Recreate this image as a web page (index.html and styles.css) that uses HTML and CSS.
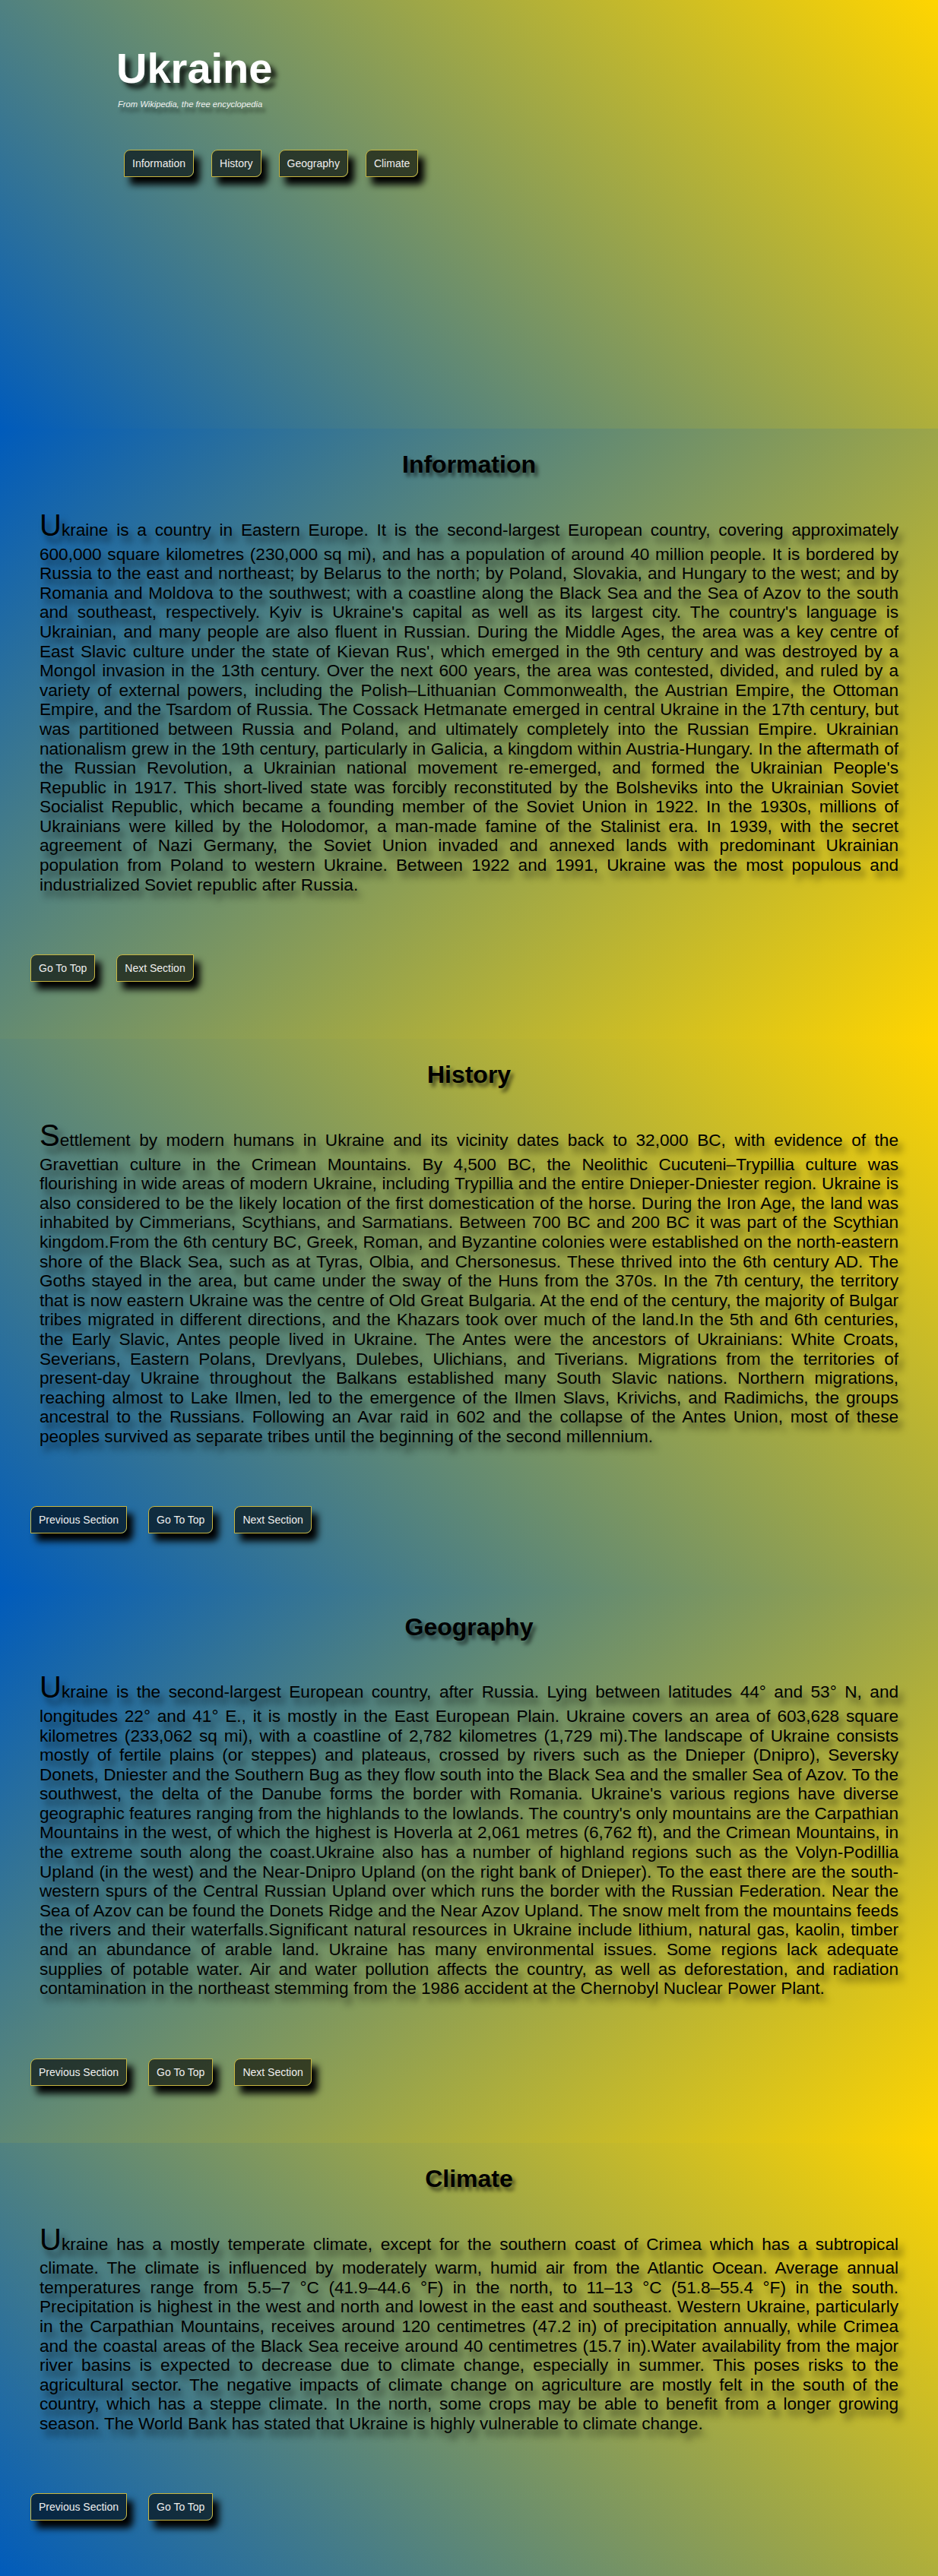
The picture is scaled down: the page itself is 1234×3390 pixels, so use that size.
FILE: index.html
```html
<!DOCTYPE html>
<html lang="en">
<head>
<meta charset="utf-8">
<title>Ukraine</title>
<link rel="stylesheet" href="styles.css">
</head>
<body>
<header class="header" id="top">
  <h1 class="title">Ukraine</h1>
  <div class="subtitle">From Wikipedia, the free encyclopedia</div>
  <nav class="nav">
    <a class="btn" href="#information">Information</a>
    <a class="btn" href="#history">History</a>
    <a class="btn" href="#geography">Geography</a>
    <a class="btn" href="#climate">Climate</a>
  </nav>
</header>

<section class="sec sec-a" id="information">
  <h2 class="sec-title">Information</h2>
  <p class="sec-text">Ukraine is a country in Eastern Europe. It is the second-largest European country, covering approximately 600,000 square kilometres (230,000 sq mi), and has a population of around 40 million people. It is bordered by Russia to the east and northeast; by Belarus to the north; by Poland, Slovakia, and Hungary to the west; and by Romania and Moldova to the southwest; with a coastline along the Black Sea and the Sea of Azov to the south and southeast, respectively. Kyiv is Ukraine's capital as well as its largest city. The country's language is Ukrainian, and many people are also fluent in Russian. During the Middle Ages, the area was a key centre of East Slavic culture under the state of Kievan Rus', which emerged in the 9th century and was destroyed by a Mongol invasion in the 13th century. Over the next 600 years, the area was contested, divided, and ruled by a variety of external powers, including the Polish–Lithuanian Commonwealth, the Austrian Empire, the Ottoman Empire, and the Tsardom of Russia. The Cossack Hetmanate emerged in central Ukraine in the 17th century, but was partitioned between Russia and Poland, and ultimately completely into the Russian Empire. Ukrainian nationalism grew in the 19th century, particularly in Galicia, a kingdom within Austria-Hungary. In the aftermath of the Russian Revolution, a Ukrainian national movement re-emerged, and formed the Ukrainian People's Republic in 1917. This short-lived state was forcibly reconstituted by the Bolsheviks into the Ukrainian Soviet Socialist Republic, which became a founding member of the Soviet Union in 1922. In the 1930s, millions of Ukrainians were killed by the Holodomor, a man-made famine of the Stalinist era. In 1939, with the secret agreement of Nazi Germany, the Soviet Union invaded and annexed lands with predominant Ukrainian population from Poland to western Ukraine. Between 1922 and 1991, Ukraine was the most populous and industrialized Soviet republic after Russia.</p>
  <div class="btns">
    <a class="btn" href="#top">Go To Top</a>
    <a class="btn" href="#history">Next Section</a>
  </div>
</section>

<section class="sec sec-b" id="history">
  <h2 class="sec-title">History</h2>
  <p class="sec-text">Settlement by modern humans in Ukraine and its vicinity dates back to 32,000 BC, with evidence of the Gravettian culture in the Crimean Mountains. By 4,500 BC, the Neolithic Cucuteni–Trypillia culture was flourishing in wide areas of modern Ukraine, including Trypillia and the entire Dnieper-Dniester region. Ukraine is also considered to be the likely location of the first domestication of the horse. During the Iron Age, the land was inhabited by Cimmerians, Scythians, and Sarmatians. Between 700 BC and 200 BC it was part of the Scythian kingdom.From the 6th century BC, Greek, Roman, and Byzantine colonies were established on the north-eastern shore of the Black Sea, such as at Tyras, Olbia, and Chersonesus. These thrived into the 6th century AD. The Goths stayed in the area, but came under the sway of the Huns from the 370s. In the 7th century, the territory that is now eastern Ukraine was the centre of Old Great Bulgaria. At the end of the century, the majority of Bulgar tribes migrated in different directions, and the Khazars took over much of the land.In the 5th and 6th centuries, the Early Slavic, Antes people lived in Ukraine. The Antes were the ancestors of Ukrainians: White Croats, Severians, Eastern Polans, Drevlyans, Dulebes, Ulichians, and Tiverians. Migrations from the territories of present-day Ukraine throughout the Balkans established many South Slavic nations. Northern migrations, reaching almost to Lake Ilmen, led to the emergence of the Ilmen Slavs, Krivichs, and Radimichs, the groups ancestral to the Russians. Following an Avar raid in 602 and the collapse of the Antes Union, most of these peoples survived as separate tribes until the beginning of the second millennium.</p>
  <div class="btns">
    <a class="btn" href="#information">Previous Section</a>
    <a class="btn" href="#top">Go To Top</a>
    <a class="btn" href="#geography">Next Section</a>
  </div>
</section>

<section class="sec sec-a" id="geography">
  <h2 class="sec-title">Geography</h2>
  <p class="sec-text">Ukraine is the second-largest European country, after Russia. Lying between latitudes 44° and 53° N, and longitudes 22° and 41° E., it is mostly in the East European Plain. Ukraine covers an area of 603,628 square kilometres (233,062 sq mi), with a coastline of 2,782 kilometres (1,729 mi).The landscape of Ukraine consists mostly of fertile plains (or steppes) and plateaus, crossed by rivers such as the Dnieper (Dnipro), Seversky Donets, Dniester and the Southern Bug as they flow south into the Black Sea and the smaller Sea of Azov. To the southwest, the delta of the Danube forms the border with Romania. Ukraine's various regions have diverse geographic features ranging from the highlands to the lowlands. The country's only mountains are the Carpathian Mountains in the west, of which the highest is Hoverla at 2,061 metres (6,762 ft), and the Crimean Mountains, in the extreme south along the coast.Ukraine also has a number of highland regions such as the Volyn-Podillia Upland (in the west) and the Near-Dnipro Upland (on the right bank of Dnieper). To the east there are the south-western spurs of the Central Russian Upland over which runs the border with the Russian Federation. Near the Sea of Azov can be found the Donets Ridge and the Near Azov Upland. The snow melt from the mountains feeds the rivers and their waterfalls.Significant natural resources in Ukraine include lithium, natural gas, kaolin, timber and an abundance of arable land. Ukraine has many environmental issues. Some regions lack adequate supplies of potable water. Air and water pollution affects the country, as well as deforestation, and radiation contamination in the northeast stemming from the 1986 accident at the Chernobyl Nuclear Power Plant.</p>
  <div class="btns">
    <a class="btn" href="#history">Previous Section</a>
    <a class="btn" href="#top">Go To Top</a>
    <a class="btn" href="#climate">Next Section</a>
  </div>
</section>

<section class="sec sec-b" id="climate">
  <h2 class="sec-title">Climate</h2>
  <p class="sec-text">Ukraine has a mostly temperate climate, except for the southern coast of Crimea which has a subtropical climate. The climate is influenced by moderately warm, humid air from the Atlantic Ocean. Average annual temperatures range from 5.5–7 °C (41.9–44.6 °F) in the north, to 11–13 °C (51.8–55.4 °F) in the south. Precipitation is highest in the west and north and lowest in the east and southeast. Western Ukraine, particularly in the Carpathian Mountains, receives around 120 centimetres (47.2 in) of precipitation annually, while Crimea and the coastal areas of the Black Sea receive around 40 centimetres (15.7 in).Water availability from the major river basins is expected to decrease due to climate change, especially in summer. This poses risks to the agricultural sector. The negative impacts of climate change on agriculture are mostly felt in the south of the country, which has a steppe climate. In the north, some crops may be able to benefit from a longer growing season. The World Bank has stated that Ukraine is highly vulnerable to climate change.</p>
  <div class="btns">
    <a class="btn" href="#geography">Previous Section</a>
    <a class="btn" href="#top">Go To Top</a>
  </div>
</section>
</body>
</html>
```

FILE: styles.css
```css
html, body {
  margin: 0;
  padding: 0;
}

body {
  font-family: "Liberation Sans", Arial, sans-serif;
  color: #000;
}

.header {
  height: 564px;
  box-sizing: border-box;
  padding: 57px 0 0 153px;
  background: linear-gradient(45deg, #005bbb, #ffd500);
}

.title {
  margin: 0;
  font-size: 56px;
  font-weight: bold;
  line-height: normal;
  color: #fff;
  text-shadow: 7px 7px 6px rgba(0, 0, 0, 0.85);
}

.subtitle {
  margin: 9px 0 0 2px;
  font-size: 11.2px;
  font-style: italic;
  line-height: normal;
  color: #f0f0f0;
  text-shadow: 4px 7px 4px rgba(0, 0, 0, 0.5);
}

.nav {
  display: flex;
  gap: 23px;
  margin: 54px 0 0 10px;
}

.btn {
  display: block;
  font-size: 14px;
  line-height: normal;
  color: #eee;
  text-decoration: none;
  padding: 9px 10px;
  border: 1px solid #c8b640;
  border-radius: 8px 0 8px 0;
  background: rgba(0, 0, 0, 0.6);
  box-shadow: 8px 10px 10px #000;
}

.sec {
  padding: 29.4px 40px 75px;
}

.sec-a {
  background: linear-gradient(135deg, #005bbb, #ffd500);
}

.sec-b {
  background: linear-gradient(45deg, #005bbb, #ffd500);
}

.sec-title {
  margin: 0 0 35.7px;
  text-align: center;
  font-size: 32px;
  font-weight: bold;
  line-height: normal;
  text-shadow: 4px 5px 5px rgba(0, 0, 0, 0.6);
}

.sec-text {
  margin: 0 12px 78.8px;
  font-size: 22.58px;
  line-height: 25.6px;
  text-align: justify;
  text-shadow: 6px 9px 8px rgba(0, 0, 0, 0.55);
}

.sec-text::first-letter {
  font-size: 40px;
  line-height: 50.5px;
}

.btns {
  display: flex;
  gap: 28px;
}
```
